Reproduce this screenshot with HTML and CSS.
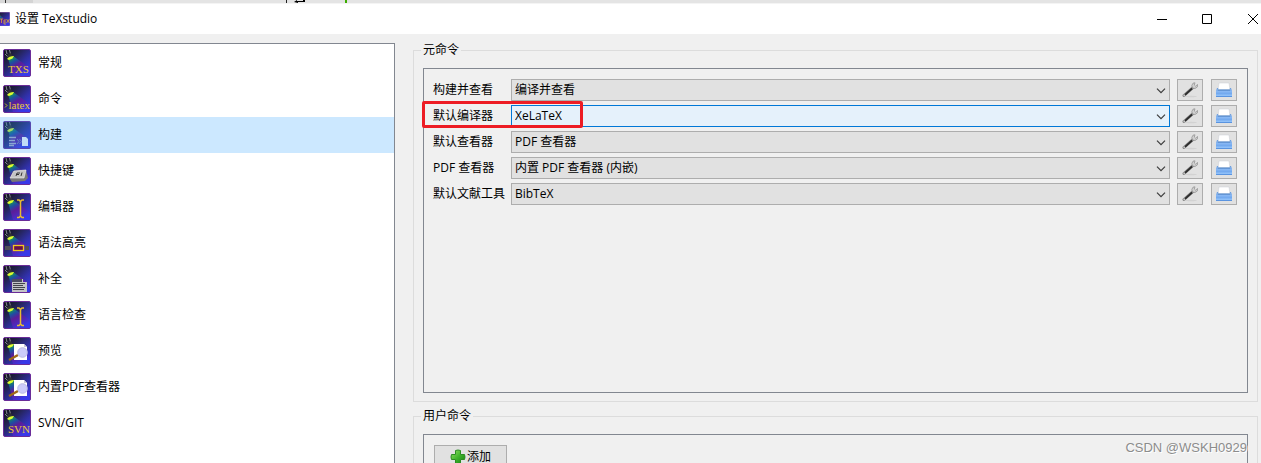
FILE: index.html
```html
<!DOCTYPE html>
<html lang="zh-CN">
<head>
<meta charset="utf-8">
<title>设置 TeXstudio</title>
<link rel="stylesheet" href="styles.css">
</head>
<body>
<svg class="sprites" aria-hidden="true">
  <defs>
    <linearGradient id="night" x1="0" y1="0" x2="1" y2="1">
      <stop offset="0" stop-color="#101014"/><stop offset=".3" stop-color="#22224c"/><stop offset=".6" stop-color="#3030a4"/><stop offset="1" stop-color="#3c3cfc"/>
    </linearGradient>
    <linearGradient id="beam" gradientUnits="userSpaceOnUse" x1="6" y1="8" x2="17" y2="27">
      <stop offset="0" stop-color="#c8e820"/><stop offset=".12" stop-color="#188860"/><stop offset=".28" stop-color="#1c50a0"/><stop offset=".5" stop-color="#5c1c98"/><stop offset=".75" stop-color="#5028b8"/><stop offset="1" stop-color="#3838e8"/>
    </linearGradient>
    <linearGradient id="tray" x1="0" y1="0" x2="0" y2="1">
      <stop offset="0" stop-color="#5a94de"/><stop offset=".45" stop-color="#8ebcf6"/><stop offset=".55" stop-color="#6ca4ec"/><stop offset="1" stop-color="#a4d0ff"/>
    </linearGradient>
    <linearGradient id="plusfill" x1="0" y1="0" x2="1" y2="1">
      <stop offset="0" stop-color="#9be26a"/><stop offset=".5" stop-color="#3fb52c"/><stop offset="1" stop-color="#157c12"/>
    </linearGradient>
    <symbol id="stage" viewBox="0 0 28 28">
      <rect x=".5" y=".5" width="27" height="27" rx="1.5" fill="url(#night)" stroke="#6a2c98"/>
      <path d="M5 9 10 7 27 19V27H10Z" fill="url(#beam)"/>
      <path d="M3 1 4 5M6.500 1 7.500 5M2 5 5 8" stroke="#85858c" stroke-width="1" fill="none"/>
      <path d="M4 6 8 4 10 7.500 5 9.500Z" fill="#303034"/>
      <path d="M4 10C5 8 8 7 11 7L9.500 9.500 6 11Z" fill="#dcfc30"/>
    </symbol>
    <symbol id="cursor" viewBox="0 0 28 28">
      <path d="M14 7H16L17 8H18L19 7H21M14 24.500H16L17 23.500H18L19 24.500H21M17.500 8V24" stroke="#e8bc30" stroke-width="1.500" fill="none"/>
    </symbol>
    <symbol id="lens" viewBox="0 0 28 28">
      <path d="M11 7H21L24 10V23H11Z" fill="#fff"/><path d="M21 7V10H24" fill="#c8c8d8"/>
      <path d="M6 23 15 18" stroke="#a06a18" stroke-width="2.500"/>
      <circle cx="19.500" cy="15.500" r="4.800" fill="#ccccfa" stroke="#bcbce4"/>
    </symbol>
    <symbol id="wrench" viewBox="0 0 16 16">
      <ellipse cx="9" cy="14.500" rx="6" ry=".8" fill="#d2d2d2"/>
      <path d="M2 13.500 11 5.500" stroke="#888" stroke-width="3" stroke-linecap="round"/>
      <path d="M3 12.800 10 6.500" stroke="#2c2c2c" stroke-width="1.800"/>
      <path d="M1.700 13.500 2.700 13" stroke="#eee" stroke-width="1.200"/>
      <path d="M13 .8 11 1.200 9.800 3.500 10.500 6 13 6.500 15.300 5 15.600 2.500 13.500 4.200 12.300 3Z" fill="#d0d0d0" stroke="#8c8c8c" stroke-width=".7"/>
    </symbol>
    <symbol id="printer" viewBox="0 0 16 16">
      <path d="M1 6H15L16 9V15H0V9Z" fill="url(#tray)"/>
      <path d="M3 1H13L14 8H2Z" fill="#fff" stroke="#c8ccd4" stroke-width=".5"/>
      <path d="M2 8H14" stroke="#3c78c4"/><path d="M0 14.500H16" stroke="#5a94e0"/>
    </symbol>
    <symbol id="chevron" viewBox="0 0 10 6"><path d="M1 .7 5 4.700 9 .7" stroke="#3c3c3c" stroke-width="1.200" fill="none"/></symbol>
  </defs>
</svg>

<div class="backdrop"><span class="tab"></span><svg class="tool" viewBox="0 0 12 3"><path d="M0 2 3 0V1H9V0H11V2H4V3Z"/></svg><span class="caret"></span></div>
<header class="titlebar">
  <svg class="app-icon" viewBox="6 0 10 14" aria-hidden="true">
    <svg width="16" height="14" preserveAspectRatio="none" viewBox="0 0 28 28"><use href="#stage"/></svg>
    <path d="M6 7H9M7.500 7V11M10 8V12M10 8H12M10 10H12M10 12H12M12.500 7 15.500 11M15.500 7 12.500 11" stroke="#d8a838" fill="none" stroke-width=".8"/>
  </svg>
  <h1>设置 TeXstudio</h1>
  <div class="controls">
    <button type="button" aria-label="最小化"><svg width="10" height="10"><path d="M0 5.500H10" /></svg></button>
    <button type="button" aria-label="最大化"><svg width="10" height="10"><path d="M.5 .5H9.500V9.500H.5Z"/></svg></button>
    <button type="button" class="close" aria-label="关闭"><svg width="10" height="10"><path d="M0 0 10 10M10 0 0 10"/></svg></button>
  </div>
</header>

<main class="dialog">
  <nav class="pages" aria-label="设置页面">
    <button type="button" class="page"><svg viewBox="0 0 28 28"><use href="#stage"/><text x="5" y="23.500" class="art-serif" font-size="11">TXS</text></svg>常规</button>
    <button type="button" class="page"><svg viewBox="0 0 28 28"><use href="#stage"/><text x="5.500" y="23.500" class="art-serif" font-size="11">latex</text><path d="M2 18.500 4 20.500 2 22.500" stroke="#c8b830" fill="none"/></svg>命令</button>
    <button type="button" class="page selected" aria-current="page"><svg viewBox="0 0 28 28"><use href="#stage"/><path d="M6 16.500H13M6 19.500H12M6 22.500H13M6 24.500H11" stroke="#b0b0cc" stroke-width="1.300"/><path d="M14 18 16 20.500 14 23M16.500 18 18.500 20.500 16.500 23" stroke="#8888a8" fill="none"/><path d="M19 16H23L25 18V25H19Z" fill="#fff"/><rect width="28" height="28" fill="#3090e0" opacity=".3"/></svg>构建</button>
    <button type="button" class="page"><svg viewBox="0 0 28 28"><use href="#stage"/><path d="M7 22 10 14 23 13 25 21 22 24 9 25Z" fill="#777"/><path d="M7 21 11 14 23 13 21 21Z" fill="#c4c4c4" stroke="#eee" stroke-width=".6"/><path d="M13 19 14 16H17M14 17.500H16M19 15.500 18 19" stroke="#333" fill="none"/></svg>快捷键</button>
    <button type="button" class="page"><svg viewBox="0 0 28 28"><use href="#stage"/><use href="#cursor"/></svg>编辑器</button>
    <button type="button" class="page"><svg viewBox="0 0 28 28"><use href="#stage"/><path d="M2 17H8V21H2ZM22 17H26V21H22Z" fill="#505058"/><rect x="10.500" y="16.500" width="10" height="5" fill="#68104c" stroke="#f0c820" stroke-width="1.300"/></svg>语法高亮</button>
    <button type="button" class="page"><svg viewBox="0 0 28 28"><use href="#stage"/><path d="M9 14H20V17H24V27H9Z" fill="#c4c4c8"/><path d="M9 14H19V17H9Z" fill="#4c4c60"/><path d="M10 18.500H22M10 20.500H20M10 22.500H22M10 24.500H21" stroke="#44444c"/></svg>补全</button>
    <button type="button" class="page"><svg viewBox="0 0 28 28"><use href="#stage"/><use href="#cursor"/></svg>语言检查</button>
    <button type="button" class="page"><svg viewBox="0 0 28 28"><use href="#stage"/><use href="#lens"/></svg>预览</button>
    <button type="button" class="page"><svg viewBox="0 0 28 28"><use href="#stage"/><use href="#lens"/></svg>内置PDF查看器</button>
    <button type="button" class="page"><svg viewBox="0 0 28 28"><use href="#stage"/><text x="5" y="23.500" class="art-serif" font-size="11">SVN</text></svg>SVN/GIT</button>
  </nav>

  <div class="settings">
    <fieldset class="group">
      <legend>元命令</legend>
      <div class="panel meta">
        <div class="row">
          <label for="build">构建并查看</label>
          <div class="combo"><select id="build"><option>编译并查看</option></select><svg><use href="#chevron"/></svg></div>
          <button type="button" class="tool-button" aria-label="配置"><svg><use href="#wrench"/></svg></button>
          <button type="button" class="tool-button" aria-label="恢复默认"><svg><use href="#printer"/></svg></button>
        </div>
        <div class="row">
          <label for="compiler">默认编译器</label>
          <div class="combo active"><select id="compiler"><option>XeLaTeX</option></select><svg><use href="#chevron"/></svg></div>
          <button type="button" class="tool-button" aria-label="配置"><svg><use href="#wrench"/></svg></button>
          <button type="button" class="tool-button" aria-label="恢复默认"><svg><use href="#printer"/></svg></button>
          <span class="highlight"></span>
        </div>
        <div class="row">
          <label for="viewer">默认查看器</label>
          <div class="combo"><select id="viewer"><option>PDF 查看器</option></select><svg><use href="#chevron"/></svg></div>
          <button type="button" class="tool-button" aria-label="配置"><svg><use href="#wrench"/></svg></button>
          <button type="button" class="tool-button" aria-label="恢复默认"><svg><use href="#printer"/></svg></button>
        </div>
        <div class="row">
          <label for="pdf">PDF 查看器</label>
          <div class="combo"><select id="pdf"><option>内置 PDF 查看器 (内嵌)</option></select><svg><use href="#chevron"/></svg></div>
          <button type="button" class="tool-button" aria-label="配置"><svg><use href="#wrench"/></svg></button>
          <button type="button" class="tool-button" aria-label="恢复默认"><svg><use href="#printer"/></svg></button>
        </div>
        <div class="row">
          <label for="bib">默认文献工具</label>
          <div class="combo"><select id="bib"><option>BibTeX</option></select><svg><use href="#chevron"/></svg></div>
          <button type="button" class="tool-button" aria-label="配置"><svg><use href="#wrench"/></svg></button>
          <button type="button" class="tool-button" aria-label="恢复默认"><svg><use href="#printer"/></svg></button>
        </div>
      </div>
    </fieldset>
    <fieldset class="group">
      <legend>用户命令</legend>
      <div class="panel user">
        <button type="button" class="add"><svg viewBox="0 0 16 16"><path d="M5.500 1.500Q8 .5 10.500 1.500V5.500H14.500Q15.500 8 14.500 10.500H10.500V14.500Q8 15.500 5.500 14.500V10.500H1.500Q.5 8 1.500 5.500H5.500Z" fill="url(#plusfill)" stroke="#2c8c24"/></svg>添加</button>
      </div>
    </fieldset>
  </div>
</main>
<div class="watermark">CSDN @WSKH0929</div>
</body>
</html>
```
FILE: styles.css
```css
* { box-sizing: border-box; }

body {
  margin: 0;
  height: 100vh;
  overflow: hidden;
  display: flex;
  flex-direction: column;
  background: #f0f0f0;
  color: #000;
  font: 12px/18px "Open Sans", "Noto Sans CJK SC", sans-serif;
}

button, select { font: inherit; color: inherit; }
.sprites { position: absolute; width: 0; height: 0; }
.art-serif { font-family: "Liberation Serif", serif; fill: #e8c838; }

.backdrop {
  display: flex;
  flex: none;
  height: 4px;
  overflow: hidden;
  background: #e4e4e4;
  border-bottom: 1px solid #f4f4f4;
}
.tab { width: 287px; border-left: 5px solid #d8d8d8; border-right: 1px solid #222; box-shadow: inset 1px 0 #333, inset 28px 0 #d4d4d4; }
.tool { width: 12px; height: 3px; margin: 0 39px 0 7px; }
.caret { width: 2px; background: #3cac00; }

.titlebar {
  display: flex;
  flex: none;
  align-items: center;
  height: 30px;
  background: #fff;
}
.app-icon { width: 10px; height: 14px; overflow: hidden; }
.titlebar h1 { margin: 0 0 0 5px; font-size: 12px; font-weight: 400; }
.controls { display: flex; height: 100%; margin-left: auto; }
.controls button {
  display: flex;
  align-items: center;
  justify-content: center;
  width: 45px;
  padding: 0;
  border: 0;
  background: none;
}
.controls .close { width: 32px; justify-content: flex-end; padding-right: 3px; }
.controls svg { fill: none; stroke: #000; }

.dialog { display: flex; flex: 1; min-height: 0; overflow: hidden; }
.pages {
  flex: none;
  width: 395px;
  margin-top: 9px;
  padding-top: 1px;
  background: #fff;
  border: 1px solid #828790;
  border-width: 1px 1px 0 0;
}
.page {
  display: flex;
  align-items: center;
  gap: 7px;
  width: 100%;
  height: 36px;
  padding: 0 3px;
  border: 0;
  background: none;
}
.page svg { width: 28px; height: 28px; }
.page.selected { background: #cce8ff; }

.settings { flex: 1; min-width: 0; padding: 7px 3px 0 18px; }
.group {
  margin: 0 0 5px;
  padding: 9px 9px 8px;
  border: 1px solid #dcdcdc;
}
.group legend { padding: 0 2px; margin-left: -2px; }
.panel { border: 1px solid #828790; }
.meta {
  display: flex;
  flex-direction: column;
  gap: 4px;
  min-height: 325px;
  padding: 10px 10px 10px 9px;
}
.row { position: relative; display: flex; gap: 8px; }
.row label { width: 70px; line-height: 22px; white-space: nowrap; }
.combo { position: relative; flex: 1; height: 22px; margin-right: -1px; }
.combo select {
  display: block;
  width: 100%;
  height: 100%;
  padding: 0 24px 0 3px;
  line-height: 20px;
  appearance: none;
  border: 1px solid #adadad;
  border-radius: 0;
  background: #e1e1e1;
}
.combo.active select { background: #e5f1fb; border-color: #0078d7; }
.combo svg { position: absolute; right: 4px; top: 9px; width: 10px; height: 6px; pointer-events: none; }
.tool-button {
  display: grid;
  place-items: center;
  width: 26px;
  height: 22px;
  padding: 0;
  border: 1px solid #adadad;
  background: #e1e1e1;
}
.tool-button svg { width: 16px; height: 16px; }
.highlight {
  position: absolute;
  left: -11px;
  top: -4px;
  width: 161px;
  height: 27px;
  border: 3px solid #ed1c24;
  border-radius: 2px;
  pointer-events: none;
}
.user { padding: 10px; }
.add {
  display: flex;
  align-items: center;
  justify-content: center;
  gap: 1px;
  width: 73px;
  height: 23px;
  padding: 0;
  border: 1px solid #adadad;
  background: #e1e1e1;
}
.add svg { width: 16px; height: 16px; }

.watermark {
  position: absolute;
  right: 14px;
  bottom: 5px;
  color: #8c8c8c;
  font: 13px/20px "Liberation Sans", sans-serif;
  text-shadow: 1px 1px #fff;
}
```
